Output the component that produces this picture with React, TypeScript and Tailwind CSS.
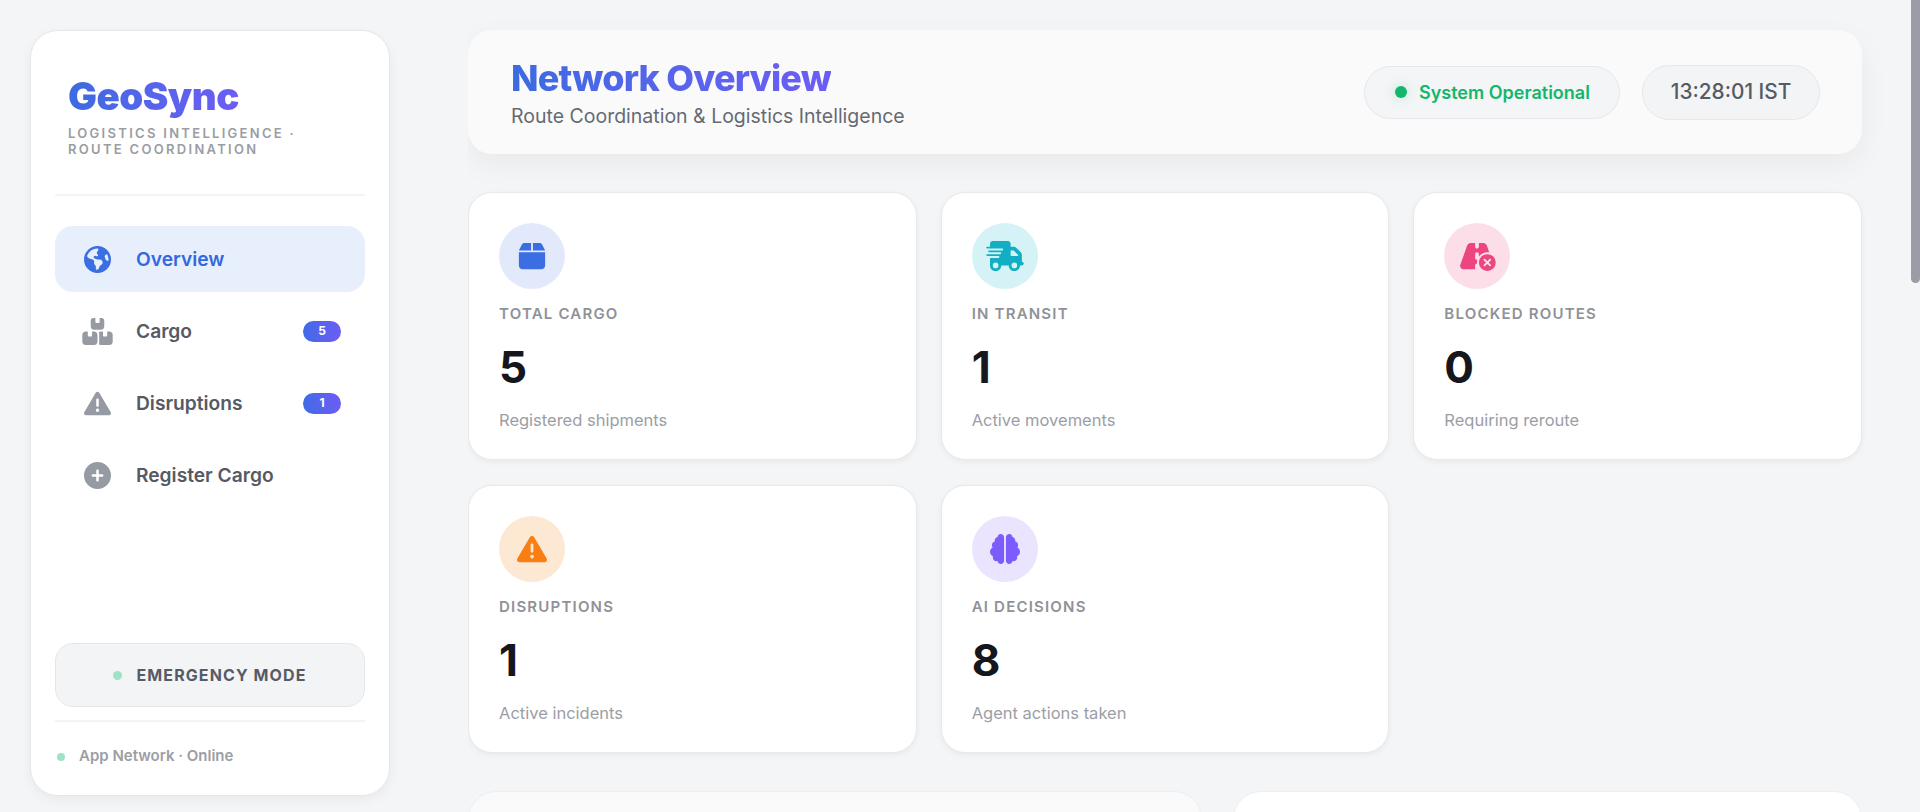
import { FaBox, FaBoxesStacked, FaBrain, FaCirclePlus, FaEarthAmericas, FaRoadCircleXmark, FaTriangleExclamation, FaTruckFast } from "react-icons/fa6"
import type { ReactNode } from "react"

const navItems: { label: string; icon: ReactNode; badge?: string; active?: boolean }[] = [
  { label: "Overview", icon: <FaEarthAmericas className="shrink-0 w-[27px] h-[27px]" />, active: true },
  { label: "Cargo", icon: <FaBoxesStacked className="shrink-0 w-[31px] h-[27px]" />, badge: "5" },
  { label: "Disruptions", icon: <FaTriangleExclamation className="shrink-0 w-[27px] h-[27px]" />, badge: "1" },
  { label: "Register Cargo", icon: <FaCirclePlus className="shrink-0 w-[27px] h-[27px]" /> },
]

const stats = [
  { label: "Total Cargo", value: "5", desc: "Registered shipments", circle: "bg-[#e2e9fb]", icon: <FaBox className="w-[30px] h-[30px] text-[#3b6ee3]" /> },
  { label: "In Transit", value: "1", desc: "Active movements", circle: "bg-[#d5f3f6]", icon: <FaTruckFast className="w-[38px] h-[30px] text-[#12afc4]" /> },
  { label: "Blocked Routes", value: "0", desc: "Requiring reroute", circle: "bg-[#fcdee9]", icon: <FaRoadCircleXmark className="w-[38px] h-[30px] text-[#ec4580]" /> },
  { label: "Disruptions", value: "1", desc: "Active incidents", circle: "bg-[#fde8d4]", icon: <FaTriangleExclamation className="w-[30px] h-[30px] text-[#f97e14]" /> },
  { label: "AI Decisions", value: "8", desc: "Agent actions taken", circle: "bg-[#eae4ff]", icon: <FaBrain className="w-[30px] h-[30px] text-[#7c5cfc]" /> },
]

function Sidebar() {
  return (
    <aside className="w-[360px] h-[766px] shrink-0 ml-[30px] mt-[30px] bg-white rounded-[28px] border border-[#e6e7ea] shadow-[0_4px_12px_rgba(0,0,0,0.05)] px-6 flex flex-col">
      <div className="px-[13px] pt-[42px] pb-[37px] border-b-2 border-[#f3f4f6]">
        <h1 className="text-[38.4px] leading-[46px] font-black tracking-[-0.5px] bg-gradient-to-r from-[#3b6be0] to-[#6c5cf5] bg-clip-text text-transparent w-fit">GeoSync</h1>
        <p className="mt-[6px] text-[13px] leading-[16px] font-semibold tracking-[2.3px] uppercase text-[#9a9da3]">
          Logistics Intelligence ·<br />Route Coordination
        </p>
      </div>
      <nav className="mt-[30px] flex flex-col gap-[6px]">
        {navItems.map((item) => (
          <div key={item.label} className={`h-[66px] rounded-[18px] flex items-center pl-[28px] pr-6 ${item.active ? "bg-[#e8effc] text-[#3468e0]" : "text-[#555a65]"}`}>
            <span className={`w-[28px] flex justify-center ${item.active ? "text-[#3b6ee3]" : "text-[#969aa2]"}`}>{item.icon}</span>
            <span className="ml-[25px] text-[19.2px] font-semibold flex-1">{item.label}</span>
            {item.badge && (
              <span className="w-[38px] h-[21px] rounded-full bg-gradient-to-r from-[#3f6ae6] to-[#6c5cf5] text-white text-[12px] font-bold flex items-center justify-center">{item.badge}</span>
            )}
          </div>
        ))}
      </nav>
      <div className="mt-auto h-[64px] rounded-[18px] bg-[#f3f4f6] border border-[#e5e7eb] flex items-center justify-center gap-[14px]">
        <span className="w-[9px] h-[9px] rounded-full bg-[#9fe3c6]" />
        <span className="text-[16px] font-bold tracking-[1.1px] text-[#565b66]">EMERGENCY MODE</span>
      </div>
      <div className="mt-[13px] border-t-2 border-[#f3f4f6] h-[75px] pb-[4px] flex items-center">
        <span className="ml-[2px] w-[8px] h-[8px] rounded-full bg-[#9fe3c6]" />
        <span className="ml-[14px] text-[15px] font-semibold text-[#9b9ea5]">App Network · Online</span>
      </div>
    </aside>
  )
}

function Header() {
  return (
    <header className="h-[124px] rounded-[24px] bg-[#fafafb] shadow-[0_10px_30px_rgba(0,0,0,0.05)] pl-[43px] pr-[42px] flex items-center justify-between">
      <div>
        <h2 className="text-[36px] leading-[46px] font-extrabold tracking-[-0.8px] bg-gradient-to-r from-[#3b6be0] to-[#6c5cf5] bg-clip-text text-transparent w-fit">Network Overview</h2>
        <p className="mt-[2px] text-[19.5px] leading-[26px] text-[#666a72]">Route Coordination &amp; Logistics Intelligence</p>
      </div>
      <div className="flex items-center gap-[22px]">
        <div className="h-[53px] w-[256px] rounded-full bg-[#f3f5f6] border border-[#e5e7eb] flex items-center pl-[30px] gap-[12px]">
          <span className="w-[12px] h-[12px] rounded-full bg-[#12b76a] shadow-[0_0_12px_rgba(18,183,106,0.25)]" />
          <span className="text-[18px] font-semibold text-[#12b76a]">System Operational</span>
        </div>
        <div className="h-[55px] w-[178px] rounded-full bg-[#f3f4f6] border border-[#e5e7eb] flex items-center justify-center text-[20.8px] font-medium text-[#555a65]">13:28:01 IST</div>
      </div>
    </header>
  )
}

export default function App() {
  return (
    <div className="relative h-screen flex gap-[78px] bg-[#f4f5f7] font-['Inter',sans-serif] overflow-hidden">
      <Sidebar />
      <main className="flex-1 h-full overflow-y-auto pr-[58px] pt-[30px] pb-[40px] [scrollbar-width:none]">
        <Header />
        <div className="mt-[38px] grid grid-cols-3 gap-x-6 gap-y-[25px]">
          {stats.map((s) => (
            <div key={s.label} className="h-[268px] bg-white rounded-[24px] border border-[#e8e9ec] shadow-[0_2px_6px_rgba(0,0,0,0.05)] pl-[30px] pt-[30px]">
              <div className={`w-[66px] h-[66px] rounded-full flex items-center justify-center ${s.circle}`}>{s.icon}</div>
              <div className="mt-[15px] text-[15px] leading-[20px] font-semibold tracking-[1.2px] uppercase text-[#8f9298]">{s.label}</div>
              <div className="mt-[15px] text-[44px] leading-[56px] font-bold text-[#15171c]">{s.value}</div>
              <div className="mt-[13px] text-[16.5px] leading-[24px] text-[#9b9ea5]">{s.desc}</div>
            </div>
          ))}
        </div>
        <div className="mt-[38px] grid grid-cols-[734px_1fr] gap-[31px]">
          <div className="h-[1500px] rounded-[28px] bg-[#fafafb] border border-[#eceef0]" />
          <div className="h-[1500px] rounded-[28px] bg-white border border-[#eceef0]" />
        </div>
      </main>
      <div className="absolute top-0 right-0 w-[9px] h-[283px] rounded-b-full bg-[#9a9ca6]" />
    </div>
  )
}
